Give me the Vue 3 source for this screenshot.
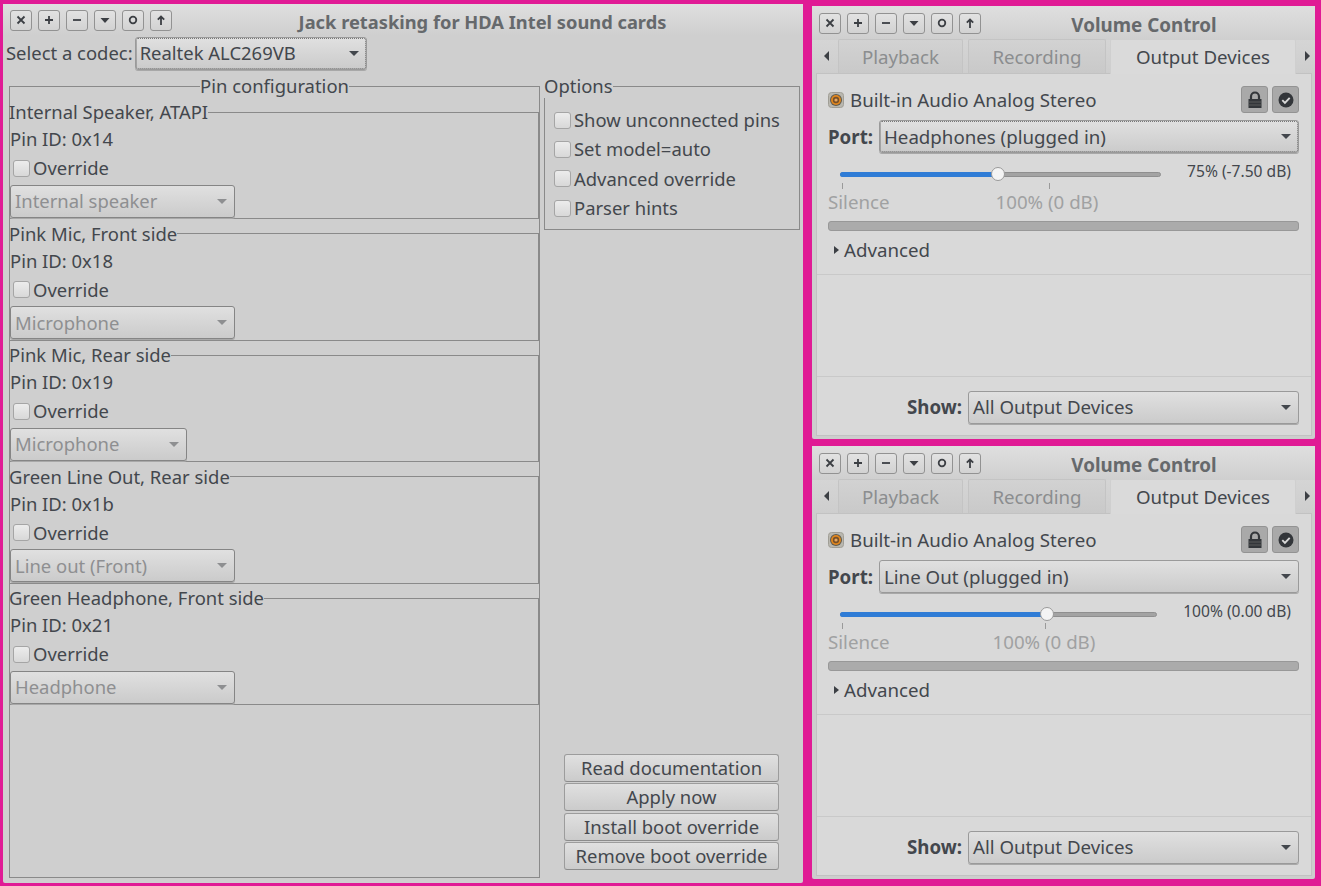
<script setup>
const titleButtons = [
  { id: 'close', paths: ['M3.5 3.5l7 7M10.5 3.5l-7 7'] },
  { id: 'plus', paths: ['M7 3v8M3 7h8'] },
  { id: 'minus', paths: ['M3 7h8'] },
  { id: 'down', fill: 'M2.5 5h9L7 10z' },
  { id: 'circle', circle: true },
  { id: 'up', paths: ['M7 12V3.5M3.8 6.7L7 3.5l3.2 3.2'] }
]
const pins = [
  { name: 'Internal Speaker, ATAPI', id: '0x14', value: 'Internal speaker', width: 225 },
  { name: 'Pink Mic, Front side', id: '0x18', value: 'Microphone', width: 225 },
  { name: 'Pink Mic, Rear side', id: '0x19', value: 'Microphone', width: 177 },
  { name: 'Green Line Out, Rear side', id: '0x1b', value: 'Line out (Front)', width: 225 },
  { name: 'Green Headphone, Front side', id: '0x21', value: 'Headphone', width: 225 }
]
const options = ['Show unconnected pins', 'Set model=auto', 'Advanced override', 'Parser hints']
const actions = ['Read documentation', 'Apply now', 'Install boot override', 'Remove boot override']
const mixers = [
  { port: 'Headphones (plugged in)', focus: true, track: 321, knob: 157, level: '75% (-7.50 dB)', tick: 207, mark: 168 },
  { port: 'Line Out (plugged in)', focus: false, track: 317, knob: 206, level: '100% (0.00 dB)', tick: 203, mark: 165 }
]
</script>

<template>
  <div class="page">
    <section class="window jack">
      <header class="titlebar">
        <div class="wm-buttons">
          <button v-for="b in titleButtons" :key="b.id" class="wm-btn" type="button" :aria-label="b.id">
            <svg width="14" height="14" viewBox="0 0 14 14">
              <path v-for="p in b.paths" :key="p" :d="p" fill="none" stroke="#3c3f44" stroke-width="1.8" />
              <path v-if="b.fill" :d="b.fill" fill="#3c3f44" />
              <circle v-if="b.circle" cx="7" cy="7" r="3.3" fill="none" stroke="#3c3f44" stroke-width="1.8" />
            </svg>
          </button>
        </div>
        <h1 class="title">Jack retasking for HDA Intel sound cards</h1>
      </header>

      <div class="codec-row">
        <span>Select a codec:</span>
        <div class="combo codec focus">
          <span>Realtek ALC269VB</span><i class="caret"></i>
        </div>
      </div>

      <div class="jack-body">
        <fieldset class="frame pin-config">
          <legend class="centered">Pin configuration</legend>
          <fieldset v-for="pin in pins" :key="pin.id" class="frame pin">
            <legend>{{ pin.name }}</legend>
            <div class="pin-id">Pin ID: {{ pin.id }}</div>
            <label class="check override"><i class="box"></i>Override</label>
            <div class="combo disabled" :style="{ width: pin.width + 'px' }">
              <span>{{ pin.value }}</span><i class="caret"></i>
            </div>
          </fieldset>
        </fieldset>

        <div class="side">
          <fieldset class="frame options">
            <legend>Options</legend>
            <label v-for="o in options" :key="o" class="check"><i class="box"></i>{{ o }}</label>
          </fieldset>
          <div class="actions">
            <button v-for="a in actions" :key="a" class="action" type="button">{{ a }}</button>
          </div>
        </div>
      </div>
    </section>

    <div class="mixers">
      <section v-for="m in mixers" :key="m.port" class="window mixer">
        <header class="titlebar">
          <div class="wm-buttons">
            <button v-for="b in titleButtons" :key="b.id" class="wm-btn" type="button" :aria-label="b.id">
              <svg width="14" height="14" viewBox="0 0 14 14">
                <path v-for="p in b.paths" :key="p" :d="p" fill="none" stroke="#3c3f44" stroke-width="1.8" />
                <path v-if="b.fill" :d="b.fill" fill="#3c3f44" />
                <circle v-if="b.circle" cx="7" cy="7" r="3.3" fill="none" stroke="#3c3f44" stroke-width="1.8" />
              </svg>
            </button>
          </div>
          <h2 class="title">Volume Control</h2>
        </header>

        <nav class="tabs">
          <i class="arrow left"></i>
          <span class="tab playback">Playback</span>
          <span class="tab recording">Recording</span>
          <span class="tab active">Output Devices</span>
          <i class="arrow right"></i>
        </nav>

        <div class="panel">
          <div class="device">
            <div class="device-head">
              <svg class="speaker" width="16" height="16" viewBox="0 0 16 16">
                <rect x=".5" y=".5" width="15" height="15" rx="3" fill="#b9b7af" stroke="#a09e96" />
                <circle cx="8" cy="8" r="6" fill="#5f5a50" />
                <circle cx="8" cy="8" r="5" fill="#e0861e" />
                <circle cx="8" cy="8" r="3.2" fill="#77502a" />
                <circle cx="8" cy="8" r="1.6" fill="#e8a860" />
              </svg>
              <span class="device-name">Built-in Audio Analog Stereo</span>
              <button class="toggle" type="button" aria-label="lock">
                <svg width="16" height="18" viewBox="0 0 16 18">
                  <path d="M4 9V5.5a4 4 0 0 1 8 0V9" fill="none" stroke="#33363a" stroke-width="2.2" />
                  <rect x="1.5" y="8" width="13" height="9" fill="#33363a" />
                  <path d="M1.5 11h13M1.5 14h13" stroke="#6a6a6a" stroke-width=".7" />
                </svg>
              </button>
              <button class="toggle" type="button" aria-label="default">
                <svg width="18" height="18" viewBox="0 0 18 18">
                  <circle cx="9" cy="9" r="7.5" fill="#33363a" />
                  <path d="M5.3 9.2l2.6 2.6 4.8-5" fill="none" stroke="#d8d8d8" stroke-width="1.9" />
                </svg>
              </button>
            </div>

            <div class="port-row">
              <b>Port:</b>
              <div class="combo grow" :class="{ focus: m.focus }">
                <span>{{ m.port }}</span><i class="caret"></i>
              </div>
            </div>

            <div class="volume">
              <div class="slider">
                <div class="track" :style="{ width: m.track + 'px' }">
                  <div class="fill" :style="{ width: m.knob + 'px' }"></div>
                  <div class="knob" :style="{ left: m.knob + 'px' }"></div>
                </div>
                <div class="ticks"><i></i><i :style="{ marginLeft: m.tick - 1 + 'px' }"></i></div>
                <div class="marks">
                  <span>Silence</span>
                  <span :style="{ marginLeft: m.mark - 62 + 'px' }">100% (0 dB)</span>
                </div>
              </div>
              <span class="level">{{ m.level }}</span>
            </div>

            <div class="meter"></div>
            <div class="advanced"><i class="arrow right small"></i>Advanced</div>
          </div>

          <div class="spacer"></div>

          <div class="show-row">
            <b>Show:</b>
            <div class="combo show">
              <span>All Output Devices</span><i class="caret"></i>
            </div>
          </div>
        </div>
      </section>
    </div>
  </div>
</template>

<style>
html, body { margin: 0; background: #e01b95; }
</style>

<style scoped>
.page {
  width: 1321px;
  height: 886px;
  box-sizing: border-box;
  padding: 4px 6px 3px 3px;
  display: flex;
  gap: 9px;
  background: #e01b95;
  font-family: "Noto Sans", "Open Sans", sans-serif;
  line-height: 24px;
  color: #43474d;
  overflow: hidden;
}
i { display: block; font-style: normal; }
.window {
  box-sizing: border-box;
  border-radius: 2px;
  display: flex;
  flex-direction: column;
}
.jack {
  width: 800px;
  height: 879px;
  background: #cfcfcf;
  font-size: 18.45px;
}
.mixers {
  display: flex;
  flex-direction: column;
  gap: 7px;
  padding-top: 2px;
}
.mixer {
  width: 503px;
  height: 433px;
  background: linear-gradient(#dcdcdc, #cdcdcd 70px);
  font-size: 18.7px;
}

.titlebar {
  display: flex;
  align-items: center;
  height: 34px;
  flex: none;
  padding: 0 6px 0 7px;
  background: linear-gradient(#dfdfdf, #cfcfcf);
}
.jack .titlebar { height: 32px; }
.wm-buttons { display: flex; gap: 6px; }
.wm-btn {
  width: 22px;
  height: 21px;
  padding: 0;
  box-sizing: border-box;
  display: flex;
  align-items: center;
  justify-content: center;
  background: linear-gradient(#e2e2e2, #d2d2d2);
  border: 1px solid #929292;
  border-radius: 3px;
}
.title {
  flex: 1;
  margin: 4px 2px 0 0;
  text-align: center;
  font-size: 18.8px;
  font-weight: 700;
  color: #66696c;
}
.jack .title { font-size: 18.3px; margin-right: 4px; }

.codec-row {
  display: flex;
  align-items: center;
  gap: 2px;
  height: 34px;
  padding-left: 3px;
}
.combo {
  box-sizing: border-box;
  height: 33px;
  display: flex;
  align-items: center;
  justify-content: space-between;
  padding: 0 7px 0 4px;
  border: 1px solid #9a9a9a;
  border-radius: 3px;
  background: linear-gradient(#e0e0e0, #cbcbcb);
  box-shadow: 0 1px 0 #a8a8a8;
}
.combo.focus { outline: 1px dotted #777; outline-offset: -2px; }
.combo.grow { flex: 1; }
.codec { width: 232px; }
.caret {
  width: 0;
  height: 0;
  border-left: 5px solid transparent;
  border-right: 5px solid transparent;
  border-top: 5px solid #43474d;
}
.disabled { color: #8e8f91; border-color: #858585; margin-top: 2px; }
.disabled .caret { border-top-color: #8e8f91; }

.jack-body {
  flex: 1;
  min-height: 0;
  display: flex;
  gap: 4px;
  padding: 4px 3px 5px 6px;
}
.frame {
  margin: 0;
  padding: 0;
  min-width: 0;
  box-sizing: border-box;
  border: 1px solid #8a8a8a;
}
legend { padding: 0; line-height: 24px; }
legend.centered { margin: 0 auto; }
.pin-config {
  width: 531px;
  display: flex;
  flex-direction: column;
  gap: 2.5px;
  padding-top: 2px;
}
.pin {
  flex: none;
  height: 119px;
  width: 530px;
  margin-left: -1px;
}
.pin legend { margin-left: -1px; }
.pin-id { height: 24px; margin-top: 3px; }
.check {
  display: flex;
  align-items: center;
  gap: 3px;
  height: 29.3px;
}
.override { padding-left: 3px; margin-top: 2.5px; }
.box {
  width: 15px;
  height: 15px;
  border: 1px solid #a5a5a5;
  border-radius: 3px;
  background: linear-gradient(#ececec, #d8d8d8);
  flex: none;
}

.side {
  flex: 1;
  display: flex;
  flex-direction: column;
  justify-content: space-between;
}
.options {
  height: 156px;
  width: 256px;
  padding: 7.5px 0 0 9px;
}
.options legend { margin-left: -10px; }
.actions {
  display: flex;
  flex-direction: column;
  gap: 1.3px;
  align-items: flex-end;
  padding: 0 21px 8px 0;
}
.action {
  width: 215px;
  height: 28px;
  padding: 0;
  box-sizing: border-box;
  font: inherit;
  line-height: 24px;
  color: inherit;
  border: 1px solid #9c9c9c;
  border-bottom-color: #8c8c8c;
  border-radius: 3px;
  background: linear-gradient(#e0e0e0, #cbcbcb);
}

.tabs {
  display: flex;
  align-items: center;
  height: 34px;
  flex: none;
  margin-top: -1px;
  padding-left: 12px;
  position: relative;
  z-index: 1;
}
.arrow {
  width: 0;
  height: 0;
  border-top: 5px solid transparent;
  border-bottom: 5px solid transparent;
}
.arrow.left { border-right: 5px solid #3c3f44; margin-right: 9px; }
.arrow.right { border-left: 5px solid #3c3f44; margin-left: 9px; }
.tab {
  box-sizing: border-box;
  height: 34px;
  display: flex;
  align-items: center;
  justify-content: center;
  border: 1px solid #c4c4c4;
  border-bottom: 0;
  border-radius: 2px 2px 0 0;
  background: linear-gradient(#d2d2d2, #c9c9c9);
  color: #8b8d8f;
}
.playback { width: 125px; margin-right: 5px; }
.recording { width: 138px; margin-right: 4px; }
.tab.active {
  width: 186px;
  height: 35px;
  margin-bottom: -1px;
  background: #dadada;
  color: #43474d;
  border-color: #cfcfcf;
}

.panel {
  flex: 1;
  min-height: 0;
  margin: 0 3px 3px 4px;
  border: 1px solid #c2c2c2;
  background: #d9d9d9;
  display: flex;
  flex-direction: column;
}
.device {
  height: 188px;
  padding: 12px 12px 0 11px;
  border-bottom: 1px solid #c9c9c9;
}
.device-head {
  display: flex;
  align-items: center;
  height: 27px;
  gap: 6px;
}
.device-name { flex: 1; }
.toggle {
  width: 27px;
  height: 27px;
  padding: 0;
  box-sizing: border-box;
  display: flex;
  align-items: center;
  justify-content: center;
  background: #a9a9a9;
  border: 1px solid #939393;
  border-radius: 3px;
}
.toggle + .toggle { margin-left: -2px; }
.port-row {
  display: flex;
  align-items: center;
  gap: 6px;
  margin-top: 7px;
}
b { font-weight: 700; }
.volume {
  display: flex;
  justify-content: space-between;
  margin-top: 8px;
  height: 58px;
}
.slider { padding-top: 11px; }
.track {
  position: relative;
  height: 5px;
  margin-left: 12px;
  border-radius: 3px;
  background: #a3a3a3;
  border: 1px solid #8f8f8f;
  box-sizing: border-box;
}
.fill {
  height: 5px;
  margin: -1px 0 0 -1px;
  border-radius: 3px;
  background: #2f7cd6;
}
.knob {
  position: absolute;
  top: -6px;
  width: 14px;
  height: 14px;
  margin-left: -7px;
  box-sizing: border-box;
  border-radius: 50%;
  background: #f4f4f4;
  border: 1px solid #9a9a9a;
}
.ticks {
  display: flex;
  height: 6px;
  margin-top: 6px;
  padding-left: 14px;
}
.ticks i { width: 1px; height: 6px; background: #9a9a9a; }
.marks {
  display: flex;
  line-height: 24px;
  margin-top: 1px;
  color: #a0a1a2;
}
.level {
  font-size: 15.6px;
  line-height: 20px;
  margin-right: 8px;
}
.meter {
  height: 10px;
  box-sizing: border-box;
  margin-top: 2px;
  background: #ababab;
  border: 1px solid #989898;
  border-radius: 3px;
}
.advanced {
  display: flex;
  align-items: center;
  margin-top: 7px;
  padding-left: 6px;
}
.arrow.small {
  margin: 0 5px 0 0;
  border-top-width: 4.5px;
  border-bottom-width: 4.5px;
}
.spacer {
  flex: 1;
  border-bottom: 1px solid #c9c9c9;
}
.show-row {
  display: flex;
  align-items: center;
  justify-content: flex-end;
  gap: 6px;
  height: 58px;
  box-sizing: border-box;
  padding: 2px 12px 0 0;
}
.show { width: 331px; }
</style>
